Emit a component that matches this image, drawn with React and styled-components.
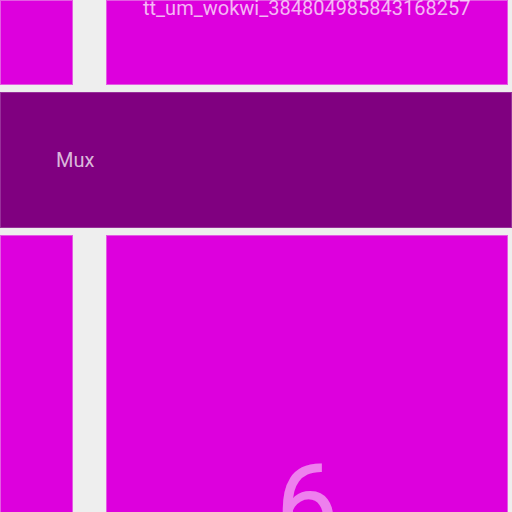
import React from "react";
import styled, { createGlobalStyle } from "styled-components";

const Global = createGlobalStyle`
  html, body { margin: 0; padding: 0; background: #eeeeee; overflow: hidden; }
  body { font-family: Roboto, "Noto Sans", sans-serif; }
`;

const Canvas = styled.div`
  width: 512px;
  height: 512px;
  overflow: hidden;
  display: flex;
  flex-direction: column;
  gap: 7px;
  background: #eeeeee;
`;

const Row = styled.div`
  display: flex;
  gap: 33px;
  height: ${(p) => p.$h}px;
  flex-shrink: 0;
`;

const Tile = styled.div`
  box-sizing: border-box;
  width: ${(p) => p.$w}px;
  height: 100%;
  flex-shrink: 0;
  background: #dd00dd;
  border: 1px solid #e45ae4;
  color: rgba(255, 255, 255, 0.72);
  padding: ${(p) => p.$pt || 0}px 0 0 ${(p) => p.$pl || 0}px;
  text-align: ${(p) => p.$align || "left"};
`;

const Name = styled.div`
  font-size: 20px;
  line-height: 16px;
  white-space: nowrap;
  margin-top: -1px;
`;

const Big = styled.div`
  font-size: 112px;
  line-height: 112px;
  color: rgba(255, 255, 255, 0.5);
`;

const Band = styled.div`
  box-sizing: border-box;
  height: 136px;
  flex-shrink: 0;
  background: #800080;
  border: 1px solid #97309a;
  display: flex;
  align-items: center;
  padding-left: 55px;
  color: rgba(255, 255, 255, 0.72);
  font-size: 20px;
  line-height: 20px;
`;

export default function App() {
  return (
    <>
      <Global />
      <Canvas>
        <Row $h={85}>
          <Tile $w={73} />
          <Tile $w={402} $pl={36}>
            <Name>tt_um_wokwi_384804985843168257</Name>
          </Tile>
        </Row>
        <Band>Mux</Band>
        <Row $h={400}>
          <Tile $w={73} />
          <Tile $w={402} $pt={213} $align="center">
            <Big>6</Big>
          </Tile>
        </Row>
      </Canvas>
    </>
  );
}
